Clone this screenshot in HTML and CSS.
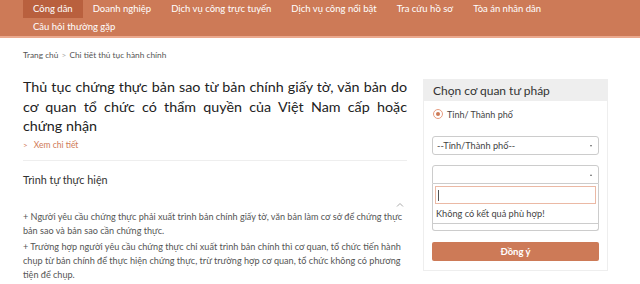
FILE: index.html
```html
<!DOCTYPE html>
<html lang="vi">

<head>
    <meta charset="utf-8">
    <meta name="viewport" content="width=device-width, initial-scale=1.0">
    <title>Chi tiết thủ tục hành chính</title>
    <link rel="stylesheet" href="styles.css">
</head>

<body>

    <header>
        <nav class="menu">
            <a class="valgt">Công dân</a>
            <a>Doanh nghiệp</a>
            <a>Dịch vụ công trực tuyến</a>
            <a>Dịch vụ công nổi bật</a>
            <a>Tra cứu hồ sơ</a>
            <a>Tòa án nhân dân</a>
            <a>Câu hỏi thường gặp</a>
        </nav>
    </header>

    <div class="breadcrumb">
        <span>Trang chủ</span>
        <span class="sep">&gt;</span>
        <span>Chi tiết thủ tục hành chính</span>
    </div>

    <main class="wrap">

        <section class="noidung">
            <h1>Thủ tục chứng thực bản sao từ bản chính giấy tờ, văn bản do cơ quan tổ chức có thẩm quyền của Việt Nam cấp hoặc chứng nhận</h1>
            <a class="xem"><span class="pil">&gt;</span> Xem chi tiết</a>

            <h2>Trình tự thực hiện</h2>
            <div class="toggle">
                <svg width="8" height="5" viewBox="0 0 8 5"><path d="M1 4.5 L4 1.5 L7 4.5" fill="none" stroke="#aaa" stroke-width="1"/></svg>
            </div>

            <p>+ Người yêu cầu chứng thực phải xuất trình bản chính giấy tờ, văn bản làm cơ sở để chứng thực bản sao và bản sao cần chứng thực.</p>
            <p>+ Trường hợp người yêu cầu chứng thực chỉ xuất trình bản chính thì cơ quan, tổ chức tiến hành chụp từ bản chính để thực hiện chứng thực, trừ trường hợp cơ quan, tổ chức không có phương tiện để chụp.</p>
            <p>+ Người thực hiện chứng thực kiểm tra bản chính, đối chiếu với bản sao, nếu nội dung bản sao đúng với bản chính thì chứng thực.</p>
        </section>

        <aside class="boks">
            <div class="boks-top">Chọn cơ quan tư pháp</div>
            <div class="boks-body">
                <label class="radio"><span class="prik"></span> Tỉnh/ Thành phố</label>

                <div class="vaelg">
                    <span>--Tỉnh/Thành phố--</span>
                    <span class="pil-ned"></span>
                </div>

                <div class="vaelg aaben">
                    <span></span>
                    <span class="pil-op"></span>
                </div>
                <div class="dropdown">
                    <div class="soeg"><span class="cursor"></span></div>
                    <div class="ingen">Không có kết quả phù hợp!</div>
                    <div class="bund"></div>
                </div>

                <button class="knap">Đồng ý</button>
            </div>
        </aside>

    </main>

</body></html>
```

FILE: styles.css
```css
body {
    margin: 0;
    background-color: white;
    font-family: 'Lato', 'Open Sans', sans-serif;
    color: #333;
    overflow: hidden;
}

header {
    background-color: #CD7A57;
    border-bottom: 2px solid #EBA98E;
    height: 36px;
}

.menu {
    display: flex;
    flex-wrap: wrap;
    padding-left: 23px;
    width: 560px;
}

.menu a {
    display: block;
    color: white;
    font-size: 9.5px;
    line-height: 18px;
    padding: 0 10px;
    white-space: nowrap;
}

.valgt {
    background-color: #B9603E;
}

.breadcrumb {
    padding: 11px 23px 0;
    font-size: 8.3px;
    line-height: 12px;
    color: #555;
}

.breadcrumb .sep {
    color: #aaa;
    margin: 0 1px;
}

.wrap {
    display: flex;
    gap: 16px;
    padding: 0 32px 0 23px;
}

.noidung {
    width: 384px;
    flex-shrink: 0;
}

h1 {
    font-family: 'Lato', sans-serif;
    font-weight: normal;
    font-size: 14.3px;
    line-height: 19.5px;
    color: #222;
    text-align: justify;
    margin: 16px 0 0;
}

.xem {
    display: block;
    font-size: 8.5px;
    color: #D07A58;
    margin-top: 3px;
    line-height: 12px;
    padding-bottom: 9px;
    border-bottom: 1px solid #eee;
}

.xem .pil {
    font-size: 8px;
    margin-right: 4px;
}

h2 {
    font-weight: normal;
    font-size: 10.8px;
    color: #333;
    margin: 12px 0 0;
    line-height: 14px;
}

.toggle {
    display: flex;
    justify-content: flex-end;
    padding: 15px 3px 0 0;
    height: 6px;
}

p {
    font-size: 9.1px;
    line-height: 14px;
    color: #555;
    margin: 2px 0 2px;
}

.boks {
    width: 184px;
    margin-top: 18px;
    height: 190px;
    border: 1px solid #eee;
}

.boks-top {
    background-color: #eee;
    font-size: 12px;
    line-height: 21px;
    padding-left: 9px;
    color: #333;
}

.boks-body {
    padding: 0 8px;
}

.radio {
    display: flex;
    align-items: center;
    font-size: 9px;
    color: #444;
    margin-top: 6px;
    height: 14px;
}

.prik {
    width: 8px;
    height: 8px;
    border: 1px solid #E79C80;
    border-radius: 50%;
    display: inline-flex;
    align-items: center;
    justify-content: center;
    margin: 0 4px 0 1px;
}

.prik::after {
    content: "";
    width: 4px;
    height: 4px;
    border-radius: 50%;
    background-color: #CD7A57;
}

.vaelg {
    display: flex;
    justify-content: space-between;
    align-items: center;
    border: 1px solid #ccc;
    border-radius: 3px;
    height: 17px;
    font-size: 9.2px;
    color: #444;
    padding: 0 6px 0 4px;
    margin-top: 15px;
}

.vaelg.aaben {
    margin-top: 10px;
    border-radius: 3px 3px 0 0;
}

.pil-ned {
    width: 0;
    height: 0;
    border-left: 1.5px solid transparent;
    border-right: 1.5px solid transparent;
    border-top: 2px solid #666;
}

.pil-op {
    width: 0;
    height: 0;
    border-left: 1.5px solid transparent;
    border-right: 1.5px solid transparent;
    border-bottom: 2px solid #666;
}

.dropdown {
    border: 1px solid #ccc;
    border-top: none;
    border-radius: 0 0 3px 3px;
    padding: 2px 2px 0;
}

.soeg {
    border: 1px solid #EBB9A5;
    height: 16px;
    display: flex;
    align-items: center;
    padding-left: 2px;
}

.cursor {
    width: 1px;
    height: 11px;
    background-color: #555;
}

.ingen {
    font-size: 9.2px;
    color: #444;
    line-height: 19px;
    padding-left: 1px;
}

.bund {
    border-top: 1px solid #ccc;
    height: 6px;
    margin: 0 -2px;
}

.knap {
    display: block;
    width: 100%;
    margin-top: 11px;
    height: 19px;
    border: none;
    border-radius: 2px;
    background-color: #CD7A57;
    color: white;
    font-family: 'Lato', sans-serif;
    font-weight: bold;
    font-size: 9.5px;
}
```
